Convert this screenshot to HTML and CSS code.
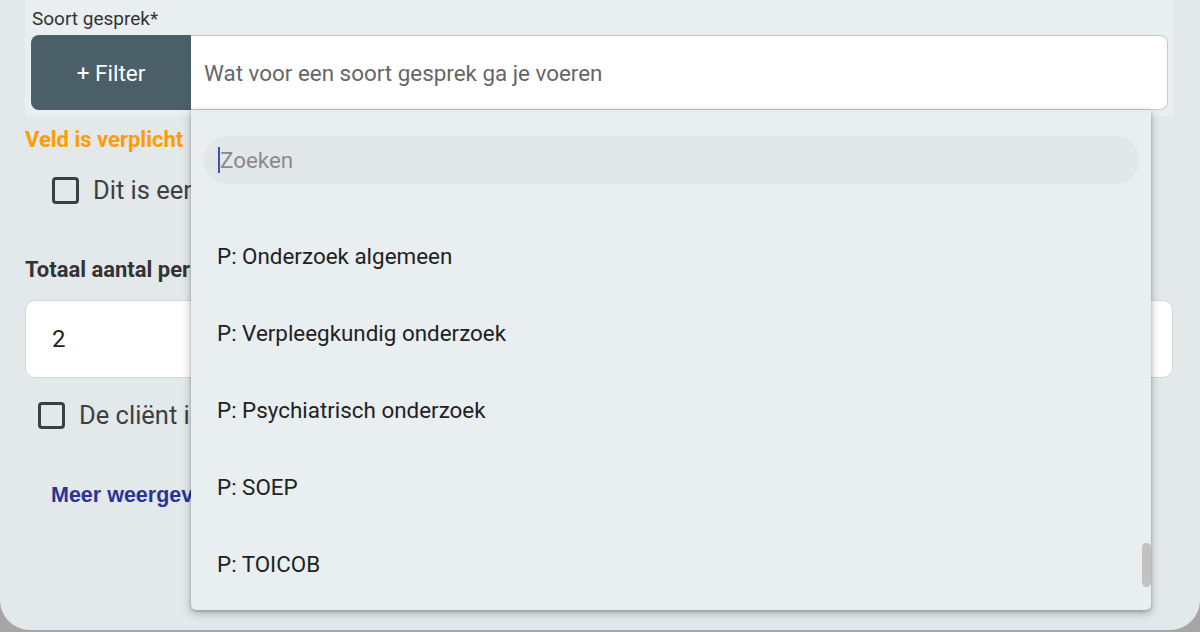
FILE: index.html
```html
<!DOCTYPE html>
<html lang="nl">
<head>
  <meta charset="UTF-8" />
  <meta name="viewport" content="width=device-width, initial-scale=1" />
  <title>Soort gesprek</title>
  <link rel="stylesheet" href="styles.css">
</head>
<body>

  <div class="card">

    <div class="field-block">
      <label class="field-label" for="soort">Soort gesprek*</label>
      <div class="combo">
        <button class="filter-btn" type="button">+ Filter</button>
        <input class="combo-input" id="soort" type="text" placeholder="Wat voor een soort gesprek ga je voeren" />
      </div>
    </div>

    <div class="error">Veld is verplicht</div>

    <label class="check check-first">
      <span class="box"></span>
      <span>Dit is een vervolggesprek</span>
    </label>

    <div class="section-label">Totaal aantal personen</div>
    <div class="number-field">2</div>

    <label class="check check-second">
      <span class="box"></span>
      <span>De cliënt is aanwezig bij het gesprek</span>
    </label>

    <a class="more" href="#">Meer weergeven</a>

    <!-- open dropdown of the combo -->
    <div class="dropdown">
      <div class="search">
        <span class="caret"></span>
        <span class="search-ph">Zoeken</span>
      </div>
      <ul class="options">
        <li>P: Onderzoek algemeen</li>
        <li>P: Verpleegkundig onderzoek</li>
        <li>P: Psychiatrisch onderzoek</li>
        <li>P: SOEP</li>
        <li>P: TOICOB</li>
      </ul>
      <div class="thumb"></div>
    </div>

  </div>

</body>
</html>
```

FILE: styles.css
```css
body {
  margin: 0;
  background: #a6a6a6;
  font-family: Roboto, "Liberation Sans", sans-serif;
}
.card {
  position: relative;
  height: 630px;
  background: #e3e8eb;
  border-radius: 0 0 30px 30px;
  overflow: hidden;
}
.field-block {
  margin-left: 25px;
  width: 1149px;
  height: 117px;
  box-sizing: border-box;
  padding: 7px 6px 0 6px;
  background: #e9eef1;
}
.field-label {
  display: block;
  font-size: 19px;
  line-height: 24px;
  color: #333;
  margin-left: 1px;
}
.combo {
  display: flex;
  height: 75px;
  margin-top: 4px;
}
.filter-btn {
  width: 160px;
  border: none;
  border-radius: 8px 0 0 8px;
  background: #4a5f68;
  color: #fff;
  font-family: Roboto, sans-serif;
  font-size: 22.5px;
}
.combo-input {
  flex: 1;
  border: 1px solid #c9c9c9;
  border-left: none;
  border-radius: 0 8px 8px 0;
  background: #fff;
  padding: 0 13px;
  font-family: Roboto, sans-serif;
  font-size: 22.4px;
  color: #333;
}
.combo-input::placeholder {
  color: #666;
}
.error {
  margin: 10px 0 0 25px;
  font-size: 22px;
  line-height: 26px;
  font-weight: bold;
  color: #ff9d00;
}
.check {
  display: flex;
  align-items: center;
  gap: 14px;
  height: 30px;
  font-size: 25.5px;
  color: #3c4043;
  white-space: nowrap;
  overflow: hidden;
}
.check-first {
  margin: 22px 0 0 52px;
  width: 139px;
}
.check-second {
  margin: 22px 0 0 38px;
  width: 153px;
}
.box {
  flex: none;
  width: 21px;
  height: 21px;
  border: 3px solid #3c4043;
  border-radius: 4px;
}
.section-label {
  margin: 53px 0 0 25px;
  width: 166px;
  font-size: 22px;
  line-height: 24px;
  font-weight: bold;
  color: #333;
  white-space: nowrap;
  overflow: hidden;
}
.number-field {
  margin: 18px 0 0 25px;
  width: 1148px;
  height: 78px;
  box-sizing: border-box;
  padding-left: 26px;
  display: flex;
  align-items: center;
  background: #fff;
  border: 1px solid #d5d5d5;
  border-radius: 10px;
  font-size: 24px;
  color: #222;
}
.more {
  display: block;
  margin: 52px 0 0 51px;
  width: 140px;
  line-height: 26px;
  font-family: "Liberation Sans", Arial, sans-serif;
  font-size: 21.5px;
  font-weight: bold;
  color: #2b3494;
  text-decoration: none;
  white-space: nowrap;
  overflow: hidden;
}
.dropdown {
  position: absolute;
  left: 191px;
  top: 110px;
  width: 960px;
  height: 500px;
  background: #e9eef1;
  border-radius: 0 0 5px 5px;
  box-shadow: 0 3px 10px rgba(0, 0, 0, 0.28), 0 1px 3px rgba(0, 0, 0, 0.2);
  padding: 26px 12px 0 13px;
  box-sizing: border-box;
  overflow: hidden;
}
.search {
  height: 48px;
  border-radius: 24px;
  background: #e2e7ea;
  display: flex;
  align-items: center;
  padding-left: 14px;
}
.caret {
  width: 2px;
  height: 26px;
  background: #3f51b5;
}
.search-ph {
  font-size: 22.4px;
  color: #8a8a8a;
}
.options {
  list-style: none;
  margin: 34px 0 0 0;
  padding: 0 0 0 13px;
}
.options li {
  height: 77px;
  line-height: 77px;
  font-size: 22.4px;
  color: #222;
}
.thumb {
  position: absolute;
  right: 0;
  top: 433px;
  width: 9px;
  height: 44px;
  border-radius: 5px;
  background: #c2c2c2;
}
```
